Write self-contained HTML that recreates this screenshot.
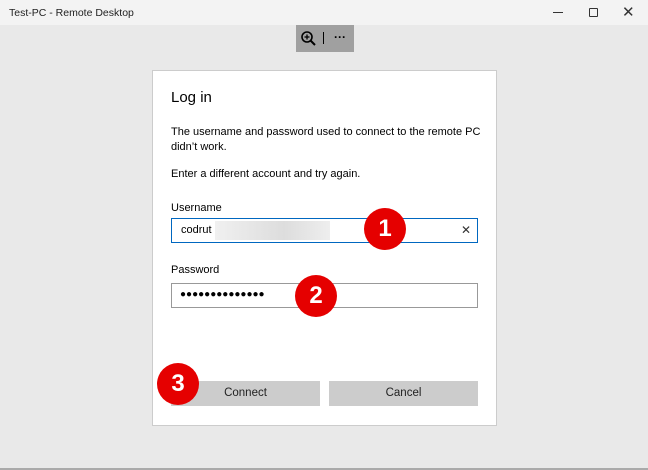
<!DOCTYPE html>
<html><head><meta charset="utf-8"><style>
*{margin:0;padding:0;box-sizing:border-box}
body{width:648px;height:470px;overflow:hidden;background:#e9e9e9;font-family:"Liberation Sans",sans-serif;position:relative;color:#000}
.title{position:absolute;left:0;top:0;width:648px;height:25px;background:#f3f3f3;font-size:11px;color:#222}
.abs{position:absolute}
.circ{position:absolute;width:42px;height:42px;border-radius:50%;background:#e50000;color:#fff;font-weight:bold;font-size:24px;text-align:center;line-height:42px}
.btn{position:absolute;height:25px;background:#ccc;font-size:11.5px;text-align:center;line-height:25px;color:#222}
</style></head><body>
<div class="title"><span class="abs" style="left:9px;top:7px;font-size:10.5px">Test-PC - Remote Desktop</span>
<span class="abs" style="left:553px;top:12px;width:10px;height:1px;background:#333"></span>
<span class="abs" style="left:589px;top:8px;width:9px;height:9px;border:1px solid #333;border-radius:1px"></span>
<span class="abs" style="left:622px;top:3px;font-size:15px;color:#333">✕</span></div>
<div class="abs" style="left:296px;top:25px;width:58px;height:27px;background:#a0a0a0"></div>
<svg class="abs" style="left:300px;top:30px" width="18" height="18"><circle cx="7" cy="7" r="5" stroke="#000" stroke-width="1.6" fill="none"/><line x1="10.5" y1="10.5" x2="15" y2="15" stroke="#000" stroke-width="2"/><line x1="7" y1="4.5" x2="7" y2="9.5" stroke="#000" stroke-width="1.3"/><line x1="4.5" y1="7" x2="9.5" y2="7" stroke="#000" stroke-width="1.3"/></svg>
<div class="abs" style="left:323px;top:32px;width:1px;height:12px;background:#000"></div>
<div class="abs" style="left:334px;top:30px;font-size:12px;font-weight:bold">···</div>
<div class="abs" style="left:152px;top:70px;width:345px;height:356px;background:#fff;border:1px solid #ccc"></div>
<div class="abs" style="left:171px;top:89px;font-size:15px">Log in</div>
<div class="abs" style="left:171px;top:125px;font-size:11px;line-height:15px;width:310px">The username and password used to connect to the remote PC didn’t work.</div>
<div class="abs" style="left:171px;top:168px;font-size:11px">Enter a different account and try again.</div>
<div class="abs" style="left:171px;top:202px;font-size:11px">Username</div>
<div class="abs" style="left:171px;top:218px;width:307px;height:25px;border:1.5px solid #0067c0"></div>
<div class="abs" style="left:181px;top:224px;font-size:11px">codrut</div>
<div class="abs" style="left:215px;top:221px;width:115px;height:19px;background:linear-gradient(90deg,#f0f0f0,#ddd 60%,#eee)"></div>
<div class="abs" style="left:461px;top:223px;font-size:12px;color:#333">✕</div>
<div class="abs" style="left:171px;top:264px;font-size:11px">Password</div>
<div class="abs" style="left:171px;top:283px;width:307px;height:25px;border:1.5px solid #999"></div>
<div class="abs" style="left:180px;top:289px;font-size:10px;letter-spacing:0px">●●●●●●●●●●●●●●</div>
<div class="btn" style="left:171px;top:381px;width:149px">Connect</div>
<div class="btn" style="left:329px;top:381px;width:149px">Cancel</div>
<div class="circ" style="left:364px;top:208px">1</div>
<div class="circ" style="left:295px;top:275px">2</div>
<div class="circ" style="left:157px;top:363px">3</div>
<div class="abs" style="left:0;top:468px;width:648px;height:2px;background:#aaa"></div>
</body></html>
